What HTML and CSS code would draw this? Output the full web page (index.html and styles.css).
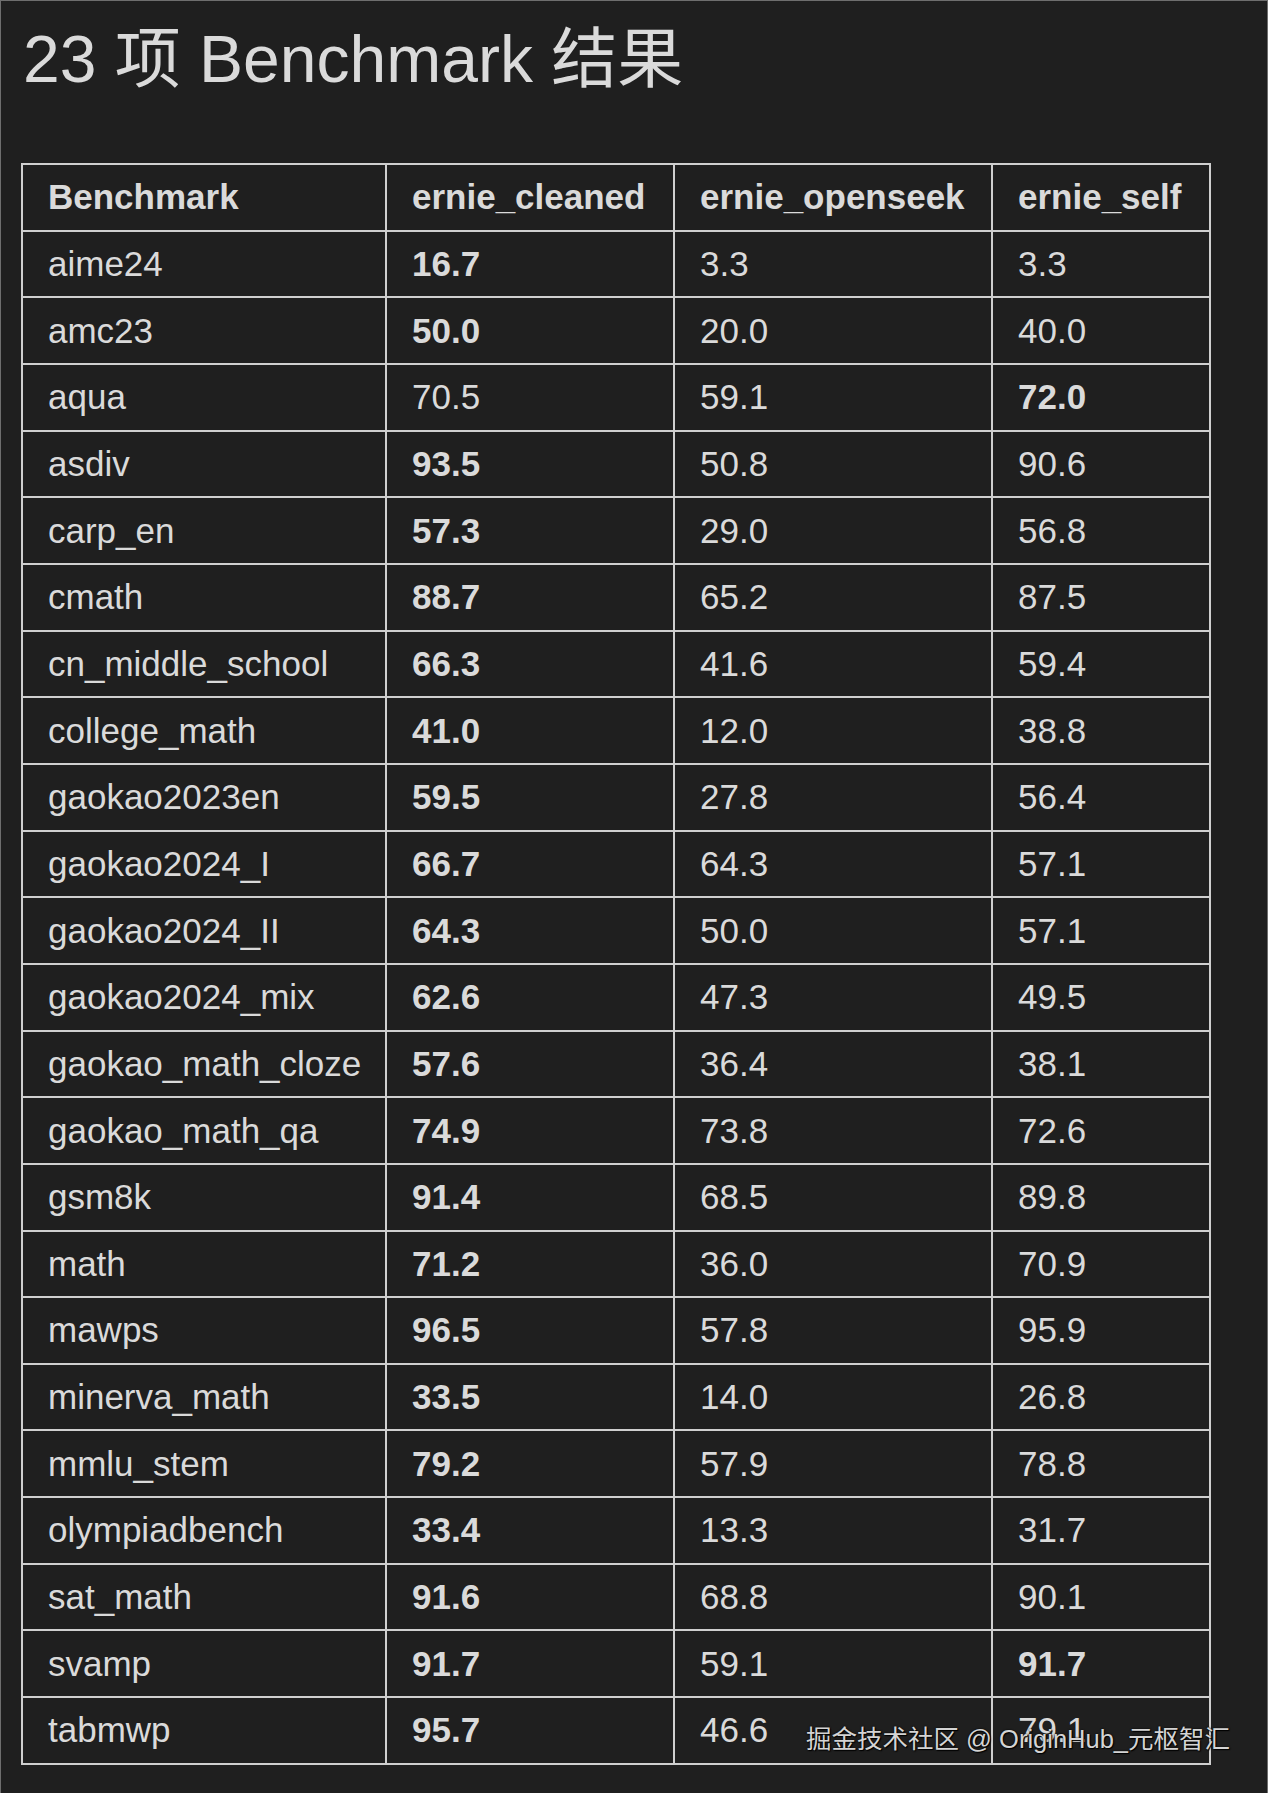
FILE: index.html
```html
<!DOCTYPE html>
<html lang="zh">
<head>
<meta charset="utf-8">
<title>23 项 Benchmark 结果</title>
<link rel="stylesheet" href="styles.css">
</head>
<body>
<div class="page">
  <h1 class="title">23 项 Benchmark 结果</h1>
  <table class="results">
    <colgroup>
      <col class="c-name"><col class="c-clean"><col class="c-open"><col class="c-self">
    </colgroup>
    <thead>
      <tr><th>Benchmark</th><th>ernie_cleaned</th><th>ernie_openseek</th><th>ernie_self</th></tr>
    </thead>
    <tbody>
      <tr><td>aime24</td><td class="b">16.7</td><td>3.3</td><td>3.3</td></tr>
      <tr><td>amc23</td><td class="b">50.0</td><td>20.0</td><td>40.0</td></tr>
      <tr><td>aqua</td><td>70.5</td><td>59.1</td><td class="b">72.0</td></tr>
      <tr><td>asdiv</td><td class="b">93.5</td><td>50.8</td><td>90.6</td></tr>
      <tr><td>carp_en</td><td class="b">57.3</td><td>29.0</td><td>56.8</td></tr>
      <tr><td>cmath</td><td class="b">88.7</td><td>65.2</td><td>87.5</td></tr>
      <tr><td>cn_middle_school</td><td class="b">66.3</td><td>41.6</td><td>59.4</td></tr>
      <tr><td>college_math</td><td class="b">41.0</td><td>12.0</td><td>38.8</td></tr>
      <tr><td>gaokao2023en</td><td class="b">59.5</td><td>27.8</td><td>56.4</td></tr>
      <tr><td>gaokao2024_I</td><td class="b">66.7</td><td>64.3</td><td>57.1</td></tr>
      <tr><td>gaokao2024_II</td><td class="b">64.3</td><td>50.0</td><td>57.1</td></tr>
      <tr><td>gaokao2024_mix</td><td class="b">62.6</td><td>47.3</td><td>49.5</td></tr>
      <tr><td>gaokao_math_cloze</td><td class="b">57.6</td><td>36.4</td><td>38.1</td></tr>
      <tr><td>gaokao_math_qa</td><td class="b">74.9</td><td>73.8</td><td>72.6</td></tr>
      <tr><td>gsm8k</td><td class="b">91.4</td><td>68.5</td><td>89.8</td></tr>
      <tr><td>math</td><td class="b">71.2</td><td>36.0</td><td>70.9</td></tr>
      <tr><td>mawps</td><td class="b">96.5</td><td>57.8</td><td>95.9</td></tr>
      <tr><td>minerva_math</td><td class="b">33.5</td><td>14.0</td><td>26.8</td></tr>
      <tr><td>mmlu_stem</td><td class="b">79.2</td><td>57.9</td><td>78.8</td></tr>
      <tr><td>olympiadbench</td><td class="b">33.4</td><td>13.3</td><td>31.7</td></tr>
      <tr><td>sat_math</td><td class="b">91.6</td><td>68.8</td><td>90.1</td></tr>
      <tr><td>svamp</td><td class="b">91.7</td><td>59.1</td><td class="b">91.7</td></tr>
      <tr><td>tabmwp</td><td class="b">95.7</td><td>46.6</td><td>79.1</td></tr>
    </tbody>
  </table>
  <div class="watermark">掘金技术社区 @ OriginHub_元枢智汇</div>
</div>
</body>
</html>
```

FILE: styles.css
```css
html, body {
  margin: 0;
  padding: 0;
  background: #1f1f1f;
}

.page {
  position: relative;
  box-sizing: border-box;
  width: 1268px;
  height: 1793px;
  overflow: hidden;
  background: #1f1f1f;
  border-top: 1px solid #6e6e6e;
  border-left: 1px solid #6e6e6e;
  border-right: 1px solid #6e6e6e;
  padding: 20px 0 0 20px;
  font-family: "Liberation Sans", "Noto Sans CJK SC", Arial, sans-serif;
  color: #d9d9d9;
}

.title {
  margin: 0;
  font-size: 66px;
  line-height: 76px;
  font-weight: 400;
  color: #dadada;
  padding-left: 2px;
}

.results {
  margin-top: 66px;
  border-collapse: collapse;
  table-layout: fixed;
  width: 1188px;
  font-size: 35px;
}

.c-name { width: 364px; }
.c-clean { width: 288px; }
.c-open { width: 318px; }
.c-self { width: 218px; }

.results th,
.results td {
  border: 2px solid #cfcfcf;
  height: 66.67px;
  box-sizing: border-box;
  padding: 0 0 0 25px;
  text-align: left;
  vertical-align: middle;
  white-space: nowrap;
  color: #dadada;
  line-height: 40px;
}

.results th {
  font-weight: 700;
}

.results td.b {
  font-weight: 700;
}

.watermark {
  position: absolute;
  left: 805px;
  top: 1722px;
  font-size: 25.5px;
  line-height: 32px;
  color: #d4d4d4;
  text-shadow: 0 0 2px #000, 1px 1px 1px #000;
  white-space: nowrap;
}
```
